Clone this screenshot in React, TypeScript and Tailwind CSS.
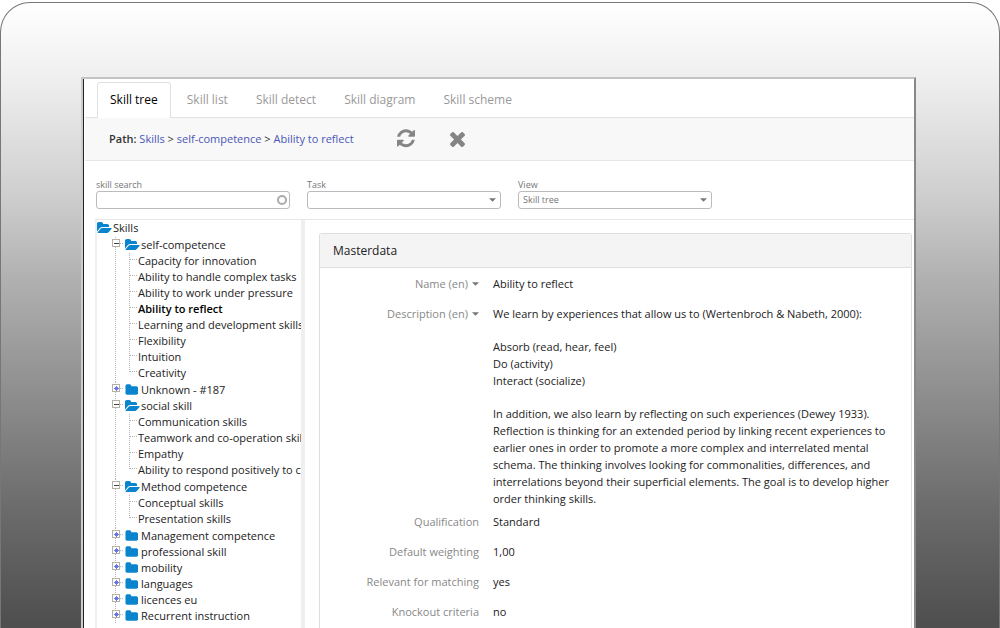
import type { ReactNode } from "react"

type Branch = { name: string; children?: string[] }

const tabs = ["Skill tree", "Skill list", "Skill detect", "Skill diagram", "Skill scheme"]

const branches: Branch[] = [
  {
    name: "self-competence",
    children: [
      "Capacity for innovation",
      "Ability to handle complex tasks",
      "Ability to work under pressure",
      "Ability to reflect",
      "Learning and development skills",
      "Flexibility",
      "Intuition",
      "Creativity",
    ],
  },
  { name: "Unknown - #187" },
  {
    name: "social skill",
    children: [
      "Communication skills",
      "Teamwork and co-operation skills",
      "Empathy",
      "Ability to respond positively to criticism",
    ],
  },
  { name: "Method competence", children: ["Conceptual skills", "Presentation skills"] },
  { name: "Management competence" },
  { name: "professional skill" },
  { name: "mobility" },
  { name: "languages" },
  { name: "licences eu" },
  { name: "Recurrent instruction" },
]

const selected = "Ability to reflect"

const Folder = ({ open = false }: { open?: boolean }) =>
  open ? (
    <svg viewBox="0 0 1920 1792" className="h-[14px] w-[15px] shrink-0 fill-[#0a84cc]" aria-hidden="true">
      <path d="M1879 952q0 31-31 66l-336 396q-43 51-120.5 86.5t-143.5 35.5h-1088q-34 0-60.5-13t-26.5-43q0-31 31-66l336-396q43-51 120.5-86.5t143.5-35.5h1088q34 0 60.5 13t26.5 43zm-343-344v160h-832q-94 0-197 47.5t-164 119.5l-337 396-5 6q0-4-.5-12.5t-.5-12.5v-960q0-92 66-158t158-66h320q92 0 158 66t66 158v32h544q92 0 158 66t66 158z" />
    </svg>
  ) : (
    <svg viewBox="0 0 1728 1792" className="mr-0.5 h-[14px] w-[13px] shrink-0 fill-[#0a84cc]" aria-hidden="true">
      <path d="M1728 608v704q0 92-66 158t-158 66h-1216q-92 0-158-66t-66-158v-960q0-92 66-158t158-66h320q92 0 158 66t66 158v32h672q92 0 158 66t66 158z" />
    </svg>
  )

// dotted guides with the expand / collapse box
const BranchGuide = ({ open }: { open: boolean }) => (
  <svg width="28" height="16" className="shrink-0" shapeRendering="crispEdges" aria-hidden="true">
    <path d="M18.5 0V16M19 6.5H27" stroke="#b3b3b3" strokeDasharray="1 1" />
    <rect x="15.5" y="2.5" width="7" height="7" fill="#fff" stroke="#b5b1a6" />
    {open ? (
      <path d="M17 6.5h5" stroke="#444" />
    ) : (
      <path d="M17 6.5h5M19.5 4v5M18 5.5h3M18 7.5h3" stroke="#6a76f0" />
    )}
  </svg>
)

const LeafGuide = ({ last }: { last: boolean }) => (
  <svg width="41" height="17" className="shrink-0 self-start" shapeRendering="crispEdges" aria-hidden="true">
    <path
      d={last ? "M18.5 0V17M32.5 0V7M33 6.5H41" : "M18.5 0V17M32.5 0V17M33 6.5H41"}
      stroke="#b3b3b3"
      strokeDasharray="1 1"
    />
  </svg>
)

const Caret = () => (
  <svg viewBox="0 0 8 4" className="h-1 w-[7px] fill-[#777]" aria-hidden="true">
    <path d="M0 0h8L4 4z" />
  </svg>
)

const Tree = () => (
  <nav aria-label="Skills" className="w-[210px] shrink-0 overflow-hidden border-r-4 border-l-2 border-[#efefef] text-[11px] leading-4 whitespace-nowrap text-[#222]">
    <div className="flex h-4 items-center gap-px">
      <Folder open />
      <span>Skills</span>
    </div>
    <ul className="pt-px">
      {branches.map((branch) => (
        <li key={branch.name}>
          <div className="flex h-4 items-center">
            <BranchGuide open={!!branch.children} />
            <Folder open={!!branch.children} />
            <span className="pl-px">{branch.name}</span>
          </div>
          {branch.children && (
            <ul className="pb-px">
              {branch.children.map((leaf, i) => (
                <li key={leaf} className="flex h-4 items-center">
                  <LeafGuide last={i === branch.children!.length - 1} />
                  <span className={leaf === selected ? "font-semibold text-black" : ""}>{leaf}</span>
                </li>
              ))}
            </ul>
          )}
        </li>
      ))}
    </ul>
  </nav>
)

const SelectBox = ({ id, label, value }: { id: string; label: string; value: string }) => (
  <div className="w-[194px]">
    <label htmlFor={id} className="block text-[9px] leading-3 text-[#777]">{label}</label>
    <div className="relative">
      <select id={id} defaultValue={value} className="block h-[18px] w-full appearance-none rounded-[3px] border border-[#bbb] bg-white px-1 text-[9px] leading-4 text-[#777]">
        <option value={value}>{value}</option>
      </select>
      <span className="pointer-events-none absolute top-[7px] right-[5px]">
        <Caret />
      </span>
    </div>
  </div>
)

const Row = ({ label, menu = false, children }: { label: string; menu?: boolean; children: ReactNode }) => (
  <div className="flex gap-[14px] pb-[13px]">
    <dt className="flex w-[159px] shrink-0 justify-end text-[#888]">
      {menu ? (
        <button type="button" className="flex items-center gap-1 self-start">
          {label}
          <Caret />
        </button>
      ) : (
        label
      )}
    </dt>
    <dd className="flex-1 text-[#222]">{children}</dd>
  </div>
)

export default function App() {
  return (
    <div className="h-screen overflow-hidden bg-white pt-0.5 font-['Open_Sans','Noto_Sans',sans-serif]">
      <div className="min-h-full rounded-t-[30px] border border-b-0 border-[#777] bg-linear-[180deg,#fff_0px,#efefef_75px,#cfcfcf_190px,#b0b0b0_277px,#6d6d6d_500px,#4f4f4f_620px] pt-[74px] pr-[83px] pl-20">
        <div className="min-h-[551px] border-2 border-b-0 border-t-[#c4c4c4] border-r-[#888] border-l-[#ccc]">
          <div className="min-h-[549px] border-l border-[#222] bg-white pt-[3px] pl-px">
            <div role="tablist" className="flex items-end border-b border-[#e2e2e2] pl-3 text-[12px] leading-4">
              {tabs.map((tab, i) => (
                <button
                  key={tab}
                  type="button"
                  role="tab"
                  aria-selected={i === 0}
                  className={
                    i === 0
                      ? "mr-0.5 -mb-px h-9 rounded-t-[3px] border border-b-0 border-[#e2e2e2] bg-white px-3 pb-0.5 text-black"
                      : "h-[35px] px-[14px] text-[#999]"
                  }
                >
                  {tab}
                </button>
              ))}
            </div>

            <div className="flex h-[43px] items-center border-b border-[#e6e6e6] bg-[#f8f8f8] pl-6 text-[11px] text-[#333]">
              <p>
                <span className="font-semibold">Path:</span> <a href="#skills" className="text-[#4a57b5]">Skills</a> &gt;{" "}
                <a href="#self-competence" className="text-[#4a57b5]">self-competence</a> &gt;{" "}
                <a href="#ability-to-reflect" className="text-[#4a57b5]">Ability to reflect</a>
              </p>
              <button type="button" aria-label="Refresh" className="ml-[43px]">
                <svg viewBox="0 0 1536 1664" className="h-5 w-[18px] fill-[#858585]">
                  <path d="M1511 928q0 5-1 7-64 268-268 434.5t-478 166.5q-146 0-282.5-55t-243.5-157l-129 129q-19 19-45 19t-45-19-19-45v-448q0-26 19-45t45-19h448q26 0 45 19t19 45-19 45l-137 137q71 66 161 102t187 36q134 0 250-65t186-179q11-17 53-117 8-23 30-23h192q13 0 22.5 9.5t9.5 22.5zm25-800v448q0 26-19 45t-45 19h-448q-26 0-45-19t-19-45 19-45l138-138q-148-137-349-137-134 0-250 65t-186 179q-11 17-53 117-8 23-30 23h-199q-13 0-22.5-9.5t-9.5-22.5v-7q65-268 270-434.5t480-166.5q146 0 284 55.5t245 156.5l130-129q19-19 45-19t45 19 19 45z" />
                </svg>
              </button>
              <button type="button" aria-label="Close" className="ml-[35px]">
                <svg viewBox="302 366 1188 1188" className="h-[15px] w-[15px] fill-[#858585]">
                  <path d="M1490 1322q0 40-28 68l-136 136q-28 28-68 28t-68-28l-294-294-294 294q-28 28-68 28t-68-28l-136-136q-28-28-28-68t28-68l294-294-294-294q-28-28-28-68t28-68l136-136q28-28 68-28t68 28l294 294 294-294q28-28 68-28t68 28l136 136q28 28 28 68t-28 68l-294 294 294 294q28 28 28 68z" />
                </svg>
              </button>
            </div>

            <div className="flex gap-[17px] pt-[18px] pb-2.5 pl-[11px]">
              <div className="w-[194px]">
                <label htmlFor="search" className="block text-[9px] leading-3 text-[#777]">skill search</label>
                <div className="relative">
                  <input id="search" type="text" className="block h-[18px] w-full rounded-[3px] border border-[#bbb] bg-white px-1 text-[9px]" />
                  <span className="absolute top-1 right-[3px] size-2.5 rounded-full border-2 border-[#aaa]" />
                </div>
              </div>
              <SelectBox id="task" label="Task" value="" />
              <SelectBox id="view" label="View" value="Skill tree" />
            </div>

            <div className="ml-2.5 flex border-t border-[#e6e6e6]">
              <Tree />
              <main className="min-w-0 flex-1 pt-[13px] pr-0.5 pl-[14px]">
                <section className="min-h-[420px] rounded-t-[3px] border border-b-0 border-[#dedede]">
                  <h2 className="flex h-[34px] items-center border-b border-[#dedede] bg-[#f4f4f4] pl-[13px] text-[12px] text-[#222]">Masterdata</h2>
                  <dl className="pt-[7px] pr-4 text-[11px] leading-[17px]">
                    <Row label="Name (en)" menu>Ability to reflect</Row>
                    <Row label="Description (en)" menu>
                      <div className="-mb-[7px] space-y-4">
                        <p>We learn by experiences that allow us to (Wertenbroch &amp; Nabeth, 2000):</p>
                        <p>
                          Absorb (read, hear, feel)<br />
                          Do (activity)<br />
                          Interact (socialize)
                        </p>
                        <p className="max-w-[402px]">
                          In addition, we also learn by reflecting on such experiences (Dewey 1933).
                          Reflection is thinking for an extended period by linking recent experiences to
                          earlier ones in order to promote a more complex and interrelated mental
                          schema. The thinking involves looking for commonalities, differences, and
                          interrelations beyond their superficial elements. The goal is to develop higher
                          order thinking skills.
                        </p>
                      </div>
                    </Row>
                    <Row label="Qualification">Standard</Row>
                    <Row label="Default weighting">1,00</Row>
                    <Row label="Relevant for matching">yes</Row>
                    <Row label="Knockout criteria">no</Row>
                  </dl>
                </section>
              </main>
            </div>
          </div>
        </div>
      </div>
    </div>
  )
}
